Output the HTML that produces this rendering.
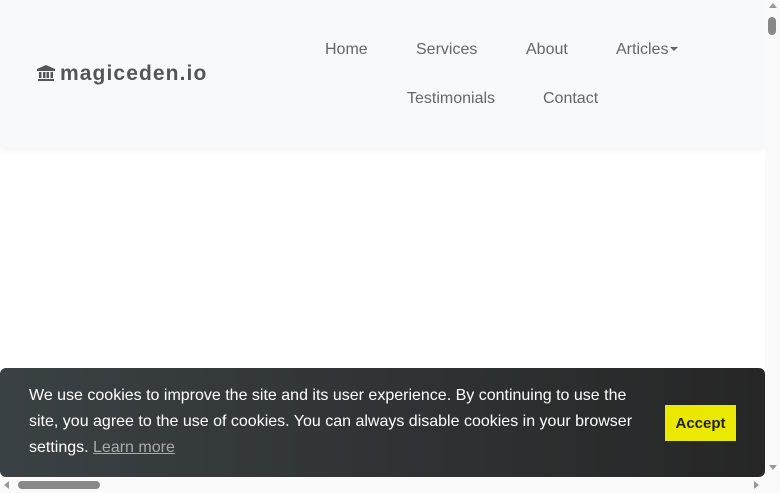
<!DOCTYPE html>
<html><head><meta charset="utf-8"><style>
html,body{margin:0;padding:0;}
body{width:780px;height:493px;overflow:hidden;position:relative;background:#fff;font-family:"Liberation Sans",sans-serif;}
.nav{position:absolute;left:0;top:0;width:765px;height:147px;background:#f8f9fa;box-shadow:0 2px 8px rgba(0,0,0,0.06);}
.brand{position:absolute;left:37px;top:62px;font-size:21px;font-weight:bold;color:#555;letter-spacing:1.1px;}
.brand svg{vertical-align:-1px;margin-right:5px;}
.nav a{position:absolute;font-size:16px;color:#666;text-decoration:none;}
.caret{display:inline-block;border-top:4px solid #666;border-left:4px solid transparent;border-right:4px solid transparent;vertical-align:3px;margin-left:2px;}
.cc{position:absolute;left:0;top:368px;width:765px;height:109px;border-radius:6px;background:linear-gradient(90deg,#3a4144,#262626);color:#fff;}
.cc p{position:absolute;left:29px;top:15px;margin:0;width:620px;font-size:16px;line-height:26px;}
.cc p a{color:#aaa;text-decoration:underline;}
.btn{position:absolute;left:665px;top:37px;width:71px;height:36px;background:#ebe900;color:#222;font-weight:bold;font-size:15px;text-align:center;line-height:37px;}
.vs{position:absolute;left:765px;top:0;width:15px;height:478px;background:#fafafa;}
.hs{position:absolute;left:0;top:478px;width:780px;height:15px;background:#fafafa;}
</style></head><body>
<div class="nav">
 <div class="brand"><svg width="18" height="16" viewBox="0 0 18 16"><path d="M9 0L0 4v2h18V4z M1 14h16v2H1z M2 7h2.5v6H2z M6 7h2.5v6H6z M9.5 7H12v6H9.5z M13.5 7H16v6h-2.5z" fill="#555"/></svg>magiceden.io</div>
 <a style="left:325px;top:41px">Home</a>
 <a style="left:416px;top:41px">Services</a>
 <a style="left:526px;top:41px">About</a>
 <a style="left:616px;top:41px">Articles<span class="caret"></span></a>
 <a style="left:407px;top:90px">Testimonials</a>
 <a style="left:543px;top:90px">Contact</a>
</div>
<div class="cc">
 <p>We use cookies to improve the site and its user experience. By continuing to use the site, you agree to the use of cookies. You can always disable cookies in your browser settings. <a>Learn more</a></p>
 <div class="btn">Accept</div>
</div>
<div class="vs">
 <div style="position:absolute;left:4px;top:3px;border-bottom:5px solid #999;border-left:4px solid transparent;border-right:4px solid transparent"></div>
 <div style="position:absolute;left:3px;top:17px;width:8px;height:18px;border-radius:4px;background:#888"></div>
 <div style="position:absolute;left:4px;top:465px;border-top:5px solid #999;border-left:4px solid transparent;border-right:4px solid transparent"></div>
</div>
<div class="hs">
 <div style="position:absolute;left:4px;top:3px;border-right:5px solid #999;border-top:4px solid transparent;border-bottom:4px solid transparent"></div>
 <div style="position:absolute;left:18px;top:3px;width:82px;height:8px;border-radius:4px;background:#888"></div>
 <div style="position:absolute;left:754px;top:3px;border-left:5px solid #999;border-top:4px solid transparent;border-bottom:4px solid transparent"></div>
</div>
</body></html>
